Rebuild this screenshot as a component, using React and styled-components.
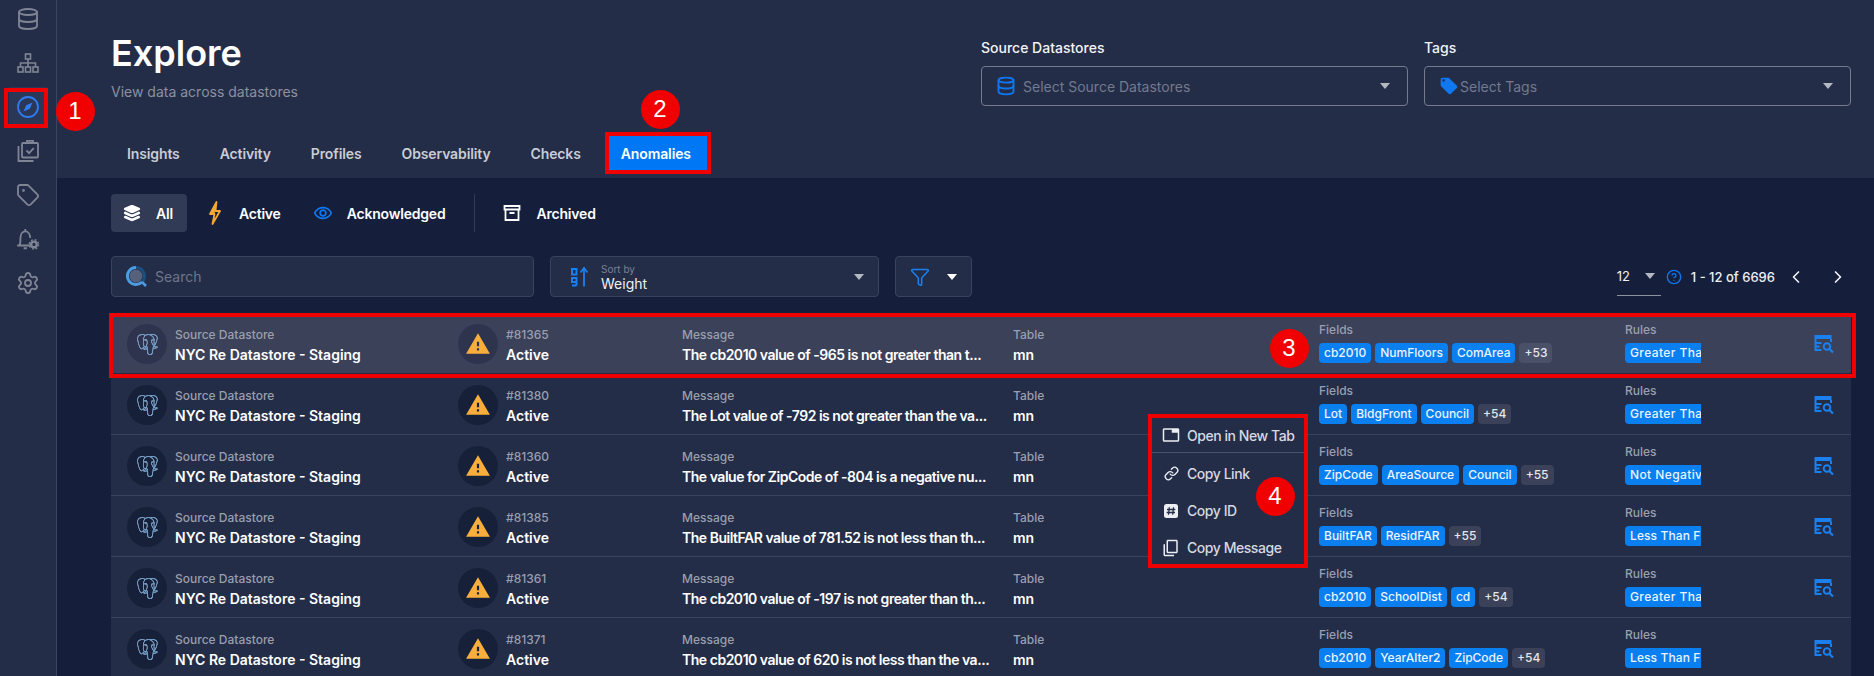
import React from "react";
import styled, { createGlobalStyle } from "styled-components";
import { Database, Tag, Settings, ChevronLeft, ChevronRight, Filter, CircleHelp, Link as LinkIcon } from "lucide-react";
import { SiPostgresql } from "react-icons/si";
import { MdWarning, MdOutlineRemoveRedEye, MdOutlineTab, MdOutlineContentCopy, MdLocalOffer } from "react-icons/md";
import { IoLayers } from "react-icons/io5";

const Global = createGlobalStyle`
  html, body { margin: 0; padding: 0; background: #151e3a; }
  body { font-family: Inter, "Noto Sans", sans-serif; color: #fff; }
  * { box-sizing: border-box; }
`;

const Page = styled.div`
  position: relative;
  display: grid;
  grid-template-columns: 57px 1fr;
  width: 1874px;
  height: 676px;
  overflow: hidden;
  background: #151e3a;
`;
const Sidebar = styled.nav`
  display: flex;
  flex-direction: column;
  align-items: center;
  gap: 4px;
  margin-top: -1px;
  padding-bottom: 1px;
  background: #232d48;
  border-right: 1px solid #3b4460;
`;
const NavItem = styled.div`
  width: 38px;
  height: 40px;
  display: flex;
  align-items: center;
  justify-content: center;
  color: ${(p) => (p.$active ? "#2f7bf2" : "#7f8594")};
  background: ${(p) => (p.$active ? "#2a3757" : "transparent")};
`;
const Main = styled.main`
  display: flex;
  flex-direction: column;
  min-width: 0;
`;
const Header = styled.header`
  height: 178px;
  flex: none;
  padding: 31px 23px 7px 54px;
  background: #232d48;
  display: flex;
  flex-direction: column;
`;
const HeaderTop = styled.div`
  display: flex;
  justify-content: space-between;
  height: 71px;
`;
const Title = styled.h1`
  margin: 0;
  font-size: 36px;
  line-height: 44px;
  font-weight: 600;
  color: #fff;
`;
const Subtitle = styled.p`
  margin: 7px 0 0;
  font-size: 14px;
  line-height: 20px;
  color: #8b90a0;
`;
const HeaderFilters = styled.div`
  display: flex;
  gap: 16px;
  margin-top: 7px;
`;
const FilterField = styled.div`
  width: 427px;
`;
const FieldLabel = styled.div`
  font-size: 14px;
  line-height: 20px;
  font-weight: 500;
  color: #f2f3f6;
  margin-bottom: 8px;
`;
const SelectBox = styled.div`
  height: 40px;
  display: flex;
  align-items: center;
  gap: ${(p) => p.$gap}px;
  padding: 0 17px 0 14px;
  border: 1px solid #757b8c;
  border-radius: 4px;
  font-size: 14px;
  color: #737a8c;
`;
const Caret = styled.span`
  margin-left: auto;
  flex: none;
  width: 0;
  height: 0;
  border-left: 5.5px solid transparent;
  border-right: 5.5px solid transparent;
  border-top: 6px solid ${(p) => p.$color || "#b4b8c2"};
`;
const Tabs = styled.div`
  display: flex;
  gap: 8px;
  margin-top: 33px;
`;
const Tab = styled.div`
  height: 36px;
  padding: 0 16px;
  display: flex;
  align-items: center;
  font-size: 14px;
  font-weight: 600;
  letter-spacing: -0.12px;
  border-radius: 2px;
  color: ${(p) => (p.$active ? "#fff" : "#c9ccd4")};
  background: ${(p) => (p.$active ? "#0078f5" : "transparent")};
`;
const Content = styled.section`
  padding: 16px 23px 0 54px;
  display: flex;
  flex-direction: column;
`;
const Toggles = styled.div`
  display: flex;
  align-items: center;
  gap: 7px;
  height: 38px;
`;
const Toggle = styled.div`
  height: 38px;
  padding: 0 14px 0 11px;
  display: flex;
  align-items: center;
  gap: 14px;
  font-size: 14px;
  font-weight: 600;
  letter-spacing: -0.2px;
  border-radius: 4px;
  color: #fff;
  background: ${(p) => (p.$active ? "#323b55" : "transparent")};
`;
const IconSlot = styled.span`
  width: 20px;
  height: 20px;
  display: flex;
  align-items: center;
  justify-content: center;
  flex: none;
`;
const VDivider = styled.div`
  width: 1px;
  height: 38px;
  margin: 0 9px 0 8px;
  background: #343c56;
`;
const Toolbar = styled.div`
  display: flex;
  align-items: center;
  gap: 16px;
  height: 41px;
  margin-top: 24px;
`;
const ToolBox = styled.div`
  height: 41px;
  width: ${(p) => p.$w}px;
  display: flex;
  align-items: center;
  gap: ${(p) => p.$gap || 8}px;
  padding: 0 14px 0 ${(p) => p.$pad || 14}px;
  background: #232d48;
  border: 1px solid #3a435d;
  border-radius: 4px;
  flex: none;
`;
const SearchText = styled.span`
  font-size: 14px;
  color: #6f7688;
`;
const SortStack = styled.div`
  display: flex;
  flex-direction: column;
  padding-top: 3px;
`;
const SortLabel = styled.span`
  font-size: 10px;
  line-height: 11px;
  color: #7a8092;
`;
const SortValue = styled.span`
  font-size: 14px;
  line-height: 18px;
  color: #eef0f4;
`;
const Pager = styled.div`
  margin-left: auto;
  display: flex;
  align-items: center;
  font-size: 14px;
  color: #eef0f4;
`;
const PageSize = styled.div`
  width: 44px;
  height: 38px;
  display: flex;
  align-items: center;
  justify-content: space-between;
  padding: 0 6px 0 0;
  border-bottom: 1px solid #8d92a0;
  font-size: 13px;
`;
const HelpSlot = styled.span`
  display: flex;
  margin-left: 5px;
`;
const PageRange = styled.span`
  margin-left: 9px;
  font-size: 13px;
  font-weight: 500;
  white-space: nowrap;
`;
const PageArrows = styled.div`
  display: flex;
  gap: 22px;
  margin: 0 3px 0 11px;
  color: #f2f3f6;
`;
const Rows = styled.div`
  margin-top: 16px;
  display: flex;
  flex-direction: column;
`;
const Row = styled.article`
  height: 61px;
  flex: none;
  display: grid;
  grid-template-columns: 331px 224px 331px 306px 306px 189px 1fr;
  align-items: center;
  padding: 2px 0 0 16px;
  background: ${(p) => (p.$hl ? "#3b4159" : "#232d48")};
  border-bottom: 1px solid #3a435d;
  &:first-child { border-bottom-color: #232d48; }
`;
const IconCell = styled.div`
  display: flex;
  align-items: center;
  gap: 8px;
`;
const Avatar = styled.div`
  width: 40px;
  height: 40px;
  flex: none;
  border-radius: 50%;
  display: flex;
  align-items: center;
  justify-content: center;
  background: ${(p) => (p.$hl ? "#2e344e" : "#172039")};
`;
const Elephant = styled(SiPostgresql)`
  color: #5a92c8;
  filter: drop-shadow(0 0 0.6px #e4edf7);
`;
const TextBlock = styled.div`
  min-width: 0;
  padding-top: 1px;
`;
const Label = styled.div`
  font-size: 12px;
  line-height: 20px;
  font-weight: 500;
  color: #9a9fae;
`;
const Value = styled.div`
  font-size: 14px;
  line-height: 19px;
  font-weight: 600;
  color: #fff;
  white-space: nowrap;
`;
const MessageValue = styled(Value)`
  letter-spacing: -0.48px;
`;
const ChipCell = styled.div`
  padding-bottom: 6px;
  min-width: 0;
`;
const ChipRow = styled.div`
  display: flex;
  gap: 4px;
  margin-top: 3px;
`;
const Chip = styled.span`
  height: 20px;
  padding: 0 5px;
  display: inline-flex;
  align-items: center;
  font-size: 12px;
  font-weight: 500;
  white-space: nowrap;
  border-radius: 4px;
  color: #eaf3ff;
  background: #0a7ff0;
`;
const MoreChip = styled(Chip)`
  color: #e5e7ec;
  background: ${(p) => (p.$hl ? "#4a5068" : "#3a4158")};
`;
const RuleChip = styled.div`
  width: 76px;
  height: 20px;
  margin-top: 3px;
  padding-left: 5px;
  line-height: 20px;
  font-size: 12px;
  font-weight: 500;
  letter-spacing: ${(p) => p.$track}px;
  white-space: nowrap;
  overflow: hidden;
  color: #eaf3ff;
  background: #0a7ff0;
  border-radius: 4px 0 0 4px;
`;
const ViewIcon = styled.div`
  color: #1a80f0;
  display: flex;
`;
const Menu = styled.div`
  position: absolute;
  left: 1152px;
  top: 418px;
  width: 152px;
  height: 146px;
  background: #232d48;
  z-index: 3;
`;
const MenuItem = styled.div`
  height: ${(p) => p.$h || 37}px;
  display: flex;
  align-items: center;
  gap: 7px;
  padding-left: 10px;
  font-size: 14px;
  font-weight: 500;
  white-space: nowrap;
  letter-spacing: -0.45px;
  color: #d6d9e0;
`;
const MenuRule = styled.div`
  height: 1px;
  background: #4c5268;
  margin-bottom: 2px;
`;
const MenuIcon = styled.span`
  width: 18px;
  height: 18px;
  display: flex;
  align-items: center;
  justify-content: center;
  color: #eceef2;
  flex: none;
`;
const CopyGlyph = styled(MdOutlineContentCopy)`
  transform: scaleX(-1) rotate(180deg);
`;
const RedBox = styled.div`
  position: absolute;
  left: ${(p) => p.$x}px;
  top: ${(p) => p.$y}px;
  width: ${(p) => p.$w}px;
  height: ${(p) => p.$h}px;
  border: 4px solid #f00000;
  pointer-events: none;
  z-index: 4;
`;
const Callout = styled.div`
  position: absolute;
  left: ${(p) => p.$x - 19.5}px;
  top: ${(p) => p.$y - 19.5}px;
  width: 39px;
  height: 39px;
  border-radius: 50%;
  background: #f00000;
  color: #fff;
  display: flex;
  align-items: center;
  justify-content: center;
  font-family: "Liberation Sans", Arial, sans-serif;
  font-size: 24px;
  z-index: 5;
`;

const CompassIcon = () => (
  <svg width="24" height="24" viewBox="0 0 24 24" fill="none" stroke="currentColor" strokeWidth="1.8">
    <circle cx="12" cy="12" r="10" />
    <path d="M16.500 7.500 13.800 13.800 7.500 16.500 10.200 10.200z" fill="currentColor" stroke="none" />
  </svg>
);
const Sitemap = () => (
  <svg width="24" height="24" viewBox="0 0 24 24" fill="none" stroke="currentColor" strokeWidth="1.6">
    <rect x="9.500" y="3" width="5" height="5" />
    <rect x="2" y="16" width="5" height="5" />
    <rect x="9.500" y="16" width="5" height="5" />
    <rect x="17" y="16" width="5" height="5" />
    <path d="M12 8v8M4.500 16v-4h15v4" />
  </svg>
);
const ClipboardStack = () => (
  <svg width="24" height="24" viewBox="0 0 24 24" fill="none" stroke="currentColor" strokeWidth="1.8">
    <path d="M2.500 7v15h15" />
    <rect x="6" y="4" width="16" height="14.500" rx="1" />
    <path d="M11 4V1.800h6V4" />
    <path d="M10.500 11.500l2.600 2.600 4.600-5" />
  </svg>
);
const BellGear = () => (
  <svg width="26" height="26" viewBox="0 0 24 24" fill="none" stroke="currentColor" strokeWidth="1.700">
    <path d="M2 18h12M4 18c1-1.500 1-3 1-6.500C5 7.500 7 5 9.500 5S14 7.500 14 11M9.500 5V2.800M8 20.500h3" />
    <circle cx="17.500" cy="17" r="2.600" strokeWidth="2.200" />
    <circle cx="17.500" cy="17" r="4.300" strokeWidth="1.300" strokeDasharray="1.700 1.700" />
  </svg>
);
const Bolt = () => (
  <svg width="14" height="24" viewBox="0 0 14 24">
    <path d="M8.500 1 2 13h4.500L4.500 23 12 10H7.500z" fill="none" stroke="#f5a833" strokeWidth="1.800" strokeLinejoin="round" />
    <path d="M8.500 1 2 13h4.500z" fill="#f5a833" />
  </svg>
);
const ArchiveBox = () => (
  <svg width="18" height="18" viewBox="0 0 18 18" fill="none" stroke="#fff" strokeWidth="1.800">
    <path d="M1.500 2h15v3.500h-15zM2.500 5.500V16h13V5.500M6.500 9h5" />
  </svg>
);
const SearchLogo = () => (
  <svg width="22" height="22" viewBox="0 0 22 22" fill="none">
    <circle cx="10" cy="10" r="6.500" fill="#56617c" />
    <path d="M10 1.500a8.500 8.500 0 0 1 6 14.500" stroke="#1b4f7f" strokeWidth="3" />
    <path d="M16 16A8.500 8.500 0 1 1 10 1.500" stroke="#4d9be0" strokeWidth="3" />
    <path d="M16 16l4 4" stroke="#4d9be0" strokeWidth="2.500" />
  </svg>
);
const SortIcon = () => (
  <svg width="18" height="22" viewBox="0 0 18 22" fill="none" stroke="#1a80f0">
    <rect x="1" y="3" width="4.500" height="5.500" strokeWidth="2" />
    <path d="M5.500 19.500H1M5.500 19.500V12H1v4h4.500" strokeWidth="2" />
    <path d="M13 20.500V2M9.500 6.500 13 2l3.500 4.500" strokeWidth="1.800" />
  </svg>
);
const InspectIcon = () => (
  <svg width="20" height="20" viewBox="0 0 20 20" fill="none">
    <path d="M0.500 1h17v4h-17z" fill="currentColor" />
    <path d="M1.500 5v11h6M1.500 9h6M1.500 12.500h4M17 5v3" stroke="currentColor" strokeWidth="2" />
    <circle cx="13" cy="12.500" r="3.300" stroke="currentColor" strokeWidth="2" />
    <path d="M15.500 15l3.500 3.500" stroke="currentColor" strokeWidth="2.200" />
  </svg>
);
const HashSquare = () => (
  <svg width="16" height="16" viewBox="0 0 16 16">
    <rect x="1" y="1" width="14" height="14" rx="2.500" fill="#eceef2" />
    <path d="M6.300 4.300 5.500 11.700M10.500 4.300l-.8 7.400M4 6.500h8.300M3.700 9.500H12" stroke="#232d48" strokeWidth="1.300" fill="none" />
  </svg>
);

const rows = [
  { id: "#81365", msg: "The cb2010 value of -965 is not greater than t...", fields: ["cb2010", "NumFloors", "ComArea"], more: "+53", rule: "Greater Tha", track: 0.4, hl: true },
  { id: "#81380", msg: "The Lot value of -792 is not greater than the va...", fields: ["Lot", "BldgFront", "Council"], more: "+54", rule: "Greater Tha", track: 0.4 },
  { id: "#81360", msg: "The value for ZipCode of -804 is a negative nu...", fields: ["ZipCode", "AreaSource", "Council"], more: "+55", rule: "Not Negativ", track: 0.4 },
  { id: "#81385", msg: "The BuiltFAR value of 781.52 is not less than th...", fields: ["BuiltFAR", "ResidFAR"], more: "+55", rule: "Less Than Fl", track: 0.1 },
  { id: "#81361", msg: "The cb2010 value of -197 is not greater than th...", fields: ["cb2010", "SchoolDist", "cd"], more: "+54", rule: "Greater Tha", track: 0.4 },
  { id: "#81371", msg: "The cb2010 value of 620 is not less than the va...", fields: ["cb2010", "YearAlter2", "ZipCode"], more: "+54", rule: "Less Than Fl", track: 0.1 },
];

export default function App() {
  return (
    <Page>
      <Global />
      <Sidebar>
        <NavItem><Database size={24} strokeWidth={1.8} /></NavItem>
        <NavItem><Sitemap /></NavItem>
        <NavItem $active><CompassIcon /></NavItem>
        <NavItem><ClipboardStack /></NavItem>
        <NavItem><Tag size={24} strokeWidth={1.8} /></NavItem>
        <NavItem><BellGear /></NavItem>
        <NavItem><Settings size={24} strokeWidth={1.8} /></NavItem>
      </Sidebar>
      <Main>
        <Header>
          <HeaderTop>
            <div>
              <Title>Explore</Title>
              <Subtitle>View data across datastores</Subtitle>
            </div>
            <HeaderFilters>
              <FilterField>
                <FieldLabel>Source Datastores</FieldLabel>
                <SelectBox $gap={7}>
                  <Database size={20} color="#0f78f0" strokeWidth={2.2} />
                  Select Source Datastores
                  <Caret />
                </SelectBox>
              </FilterField>
              <FilterField>
                <FieldLabel>Tags</FieldLabel>
                <SelectBox $gap={1}>
                  <MdLocalOffer size={20} color="#0f78f0" />
                  Select Tags
                  <Caret />
                </SelectBox>
              </FilterField>
            </HeaderFilters>
          </HeaderTop>
          <Tabs>
            <Tab>Insights</Tab>
            <Tab>Activity</Tab>
            <Tab>Profiles</Tab>
            <Tab>Observability</Tab>
            <Tab>Checks</Tab>
            <Tab $active>Anomalies</Tab>
          </Tabs>
        </Header>
        <Content>
          <Toggles>
            <Toggle $active><IconSlot><IoLayers size={20} color="#fff" /></IconSlot>All</Toggle>
            <Toggle><IconSlot><Bolt /></IconSlot>Active</Toggle>
            <Toggle><IconSlot><MdOutlineRemoveRedEye size={22} color="#0f78f0" /></IconSlot>Acknowledged</Toggle>
            <VDivider />
            <Toggle><IconSlot><ArchiveBox /></IconSlot>Archived</Toggle>
          </Toggles>
          <Toolbar>
            <ToolBox $w={423} $gap={7}>
              <SearchLogo />
              <SearchText>Search</SearchText>
            </ToolBox>
            <ToolBox $w={329} $gap={12} $pad={20}>
              <SortIcon />
              <SortStack>
                <SortLabel>Sort by</SortLabel>
                <SortValue>Weight</SortValue>
              </SortStack>
              <Caret />
            </ToolBox>
            <ToolBox $w={77} $gap={10}>
              <Filter size={20} color="#1a80f0" strokeWidth={1.8} />
              <Caret $color="#fff" />
            </ToolBox>
            <Pager>
              <PageSize>12<Caret /></PageSize>
              <HelpSlot><CircleHelp size={16} color="#0f78f0" /></HelpSlot>
              <PageRange>1 - 12 of 6696</PageRange>
              <PageArrows>
                <ChevronLeft size={20} />
                <ChevronRight size={20} />
              </PageArrows>
            </Pager>
          </Toolbar>
          <Rows>
            {rows.map((r) => (
              <Row key={r.id} $hl={r.hl}>
                <IconCell>
                  <Avatar $hl={r.hl}><Elephant size={21} /></Avatar>
                  <TextBlock>
                    <Label>Source Datastore</Label>
                    <Value>NYC Re Datastore - Staging</Value>
                  </TextBlock>
                </IconCell>
                <IconCell>
                  <Avatar $hl={r.hl}><MdWarning size={26} color="#f9ae3b" /></Avatar>
                  <TextBlock>
                    <Label>{r.id}</Label>
                    <Value>Active</Value>
                  </TextBlock>
                </IconCell>
                <TextBlock>
                  <Label>Message</Label>
                  <MessageValue>{r.msg}</MessageValue>
                </TextBlock>
                <TextBlock>
                  <Label>Table</Label>
                  <Value>mn</Value>
                </TextBlock>
                <ChipCell>
                  <Label>Fields</Label>
                  <ChipRow>
                    {r.fields.map((f) => <Chip key={f}>{f}</Chip>)}
                    <MoreChip $hl={r.hl}>{r.more}</MoreChip>
                  </ChipRow>
                </ChipCell>
                <ChipCell>
                  <Label>Rules</Label>
                  <RuleChip $track={r.track}>{r.rule}</RuleChip>
                </ChipCell>
                <ViewIcon><InspectIcon /></ViewIcon>
              </Row>
            ))}
          </Rows>
        </Content>
      </Main>
      <Menu>
        <MenuItem $h={34}><MenuIcon><MdOutlineTab size={20} /></MenuIcon>Open in New Tab</MenuItem>
        <MenuRule />
        <MenuItem><MenuIcon><LinkIcon size={15} strokeWidth={2.2} /></MenuIcon>Copy Link</MenuItem>
        <MenuItem><MenuIcon><HashSquare /></MenuIcon>Copy ID</MenuItem>
        <MenuItem><MenuIcon><CopyGlyph size={18} /></MenuIcon>Copy Message</MenuItem>
      </Menu>
      <RedBox $x={4} $y={88} $w={44} $h={40} />
      <RedBox $x={605} $y={132} $w={106} $h={42} />
      <RedBox $x={109} $y={313} $w={1747} $h={65} />
      <RedBox $x={1148} $y={414} $w={160} $h={154} />
      <Callout $x={75} $y={111}>1</Callout>
      <Callout $x={660} $y={109}>2</Callout>
      <Callout $x={1289} $y={348}>3</Callout>
      <Callout $x={1275} $y={496}>4</Callout>
    </Page>
  );
}
